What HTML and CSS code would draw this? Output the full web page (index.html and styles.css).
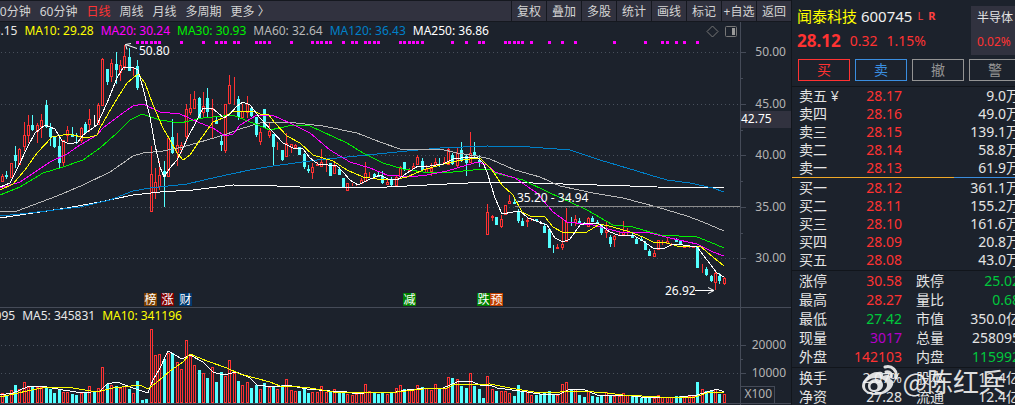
FILE: index.html
```
<!DOCTYPE html>
<html lang="zh-CN">
<head>
    <meta charset="UTF-8">
    <meta name="viewport" content="width=device-width, initial-scale=1.0">
    <title>闻泰科技 600745</title>
    <link rel="stylesheet" href="styles.css">
</head>
<body>
    <main class="main">
        <nav class="toolbar">
            <div class="periods">
                <button>30分钟</button>
                <button>60分钟</button>
                <button class="active">日线</button>
                <button>周线</button>
                <button>月线</button>
                <button>多周期</button>
                <button>更多 〉</button>
            </div>
            <div class="tools">
                <button>复权</button>
                <button>叠加</button>
                <button>多股</button>
                <button>统计</button>
                <button>画线</button>
                <button>标记</button>
                <button>+自选</button>
                <button>返回</button>
            </div>
        </nav>
        <div class="chart">
            <svg id="chart" viewBox="0 22 791 383">
                <g id="grid"></g>
                <g id="dots"></g>
                <g id="candles"></g>
                <g id="lines"></g>
                <g id="axis"></g>
                <g class="icons">
                    <path d="M707 31.5l5.5-5.5 5.5 5.5-5.5 5.5z" />
                    <rect x="725.5" y="26.5" width="11" height="10" rx="1" />
                    <rect class="fill" x="732" y="28" width="3" height="7" />
                </g>
                <g class="marks">
                    <path d="M137 48.5L125.5 44.5M131 43.5l-5.5 1 1.5 5" />
                    <text x="139" y="55">50.80</text>
                    <text x="517" y="202">35.20 - 34.94</text>
                    <text x="665" y="295">26.92</text>
                    <path d="M695 290.5h19M708 287.5l6 3-6 3" />
                </g>
                <g id="tags"></g>
            </svg>
            <div class="legend legend-price">
                <span class="ma5">MA5: 28.15</span>
                <span class="ma10">MA10: 29.28</span>
                <span class="ma20">MA20: 30.24</span>
                <span class="ma30">MA30: 30.93</span>
                <span class="ma60">MA60: 32.64</span>
                <span class="ma120">MA120: 36.43</span>
                <span class="ma250">MA250: 36.86</span>
            </div>
            <div class="legend legend-volume">
                <span class="ma5">258095</span>
                <span class="ma5">MA5: 345831</span>
                <span class="ma10">MA10: 341196</span>
            </div>
        </div>
    </main>

    <aside class="quote">
        <header class="stock">
            <div>
                <h1>闻泰科技 <span class="code">600745</span><small>L</small><small class="bold">R</small></h1>
                <p class="price"><strong>28.12</strong><span>0.32</span><span>1.15%</span></p>
            </div>
            <a class="sector" href="#">半导体<span>0.02%</span></a>
        </header>
        <div class="actions">
            <button class="buy">买</button>
            <button class="sell">卖</button>
            <button>撤</button>
            <button>警</button>
        </div>
        <table class="book">
            <tbody id="asks"></tbody>
        </table>
        <div class="ratio"><i></i></div>
        <table class="book">
            <tbody id="bids"></tbody>
        </table>
        <section class="info">
            <table>
                <tbody id="info"></tbody>
            </table>
        </section>
        <section class="info">
            <table>
                <tbody id="more"></tbody>
            </table>
        </section>
        <div class="watermark">
            <svg viewBox="0 0 36 32">
                <path fill-rule="evenodd" d="M16 7c3-1 6 0 5 4 4-2 9-1 7 3 4 1 4 5 2 8-3 5-9 8-16 8C6 30 0 26 0 21 0 14 10 6 16 7zM14 13c-6 0-11 3-11 8s5 7 11 7 11-4 11-8-5-7-11-7z" />
                <path fill-rule="evenodd" d="M14 14c-5 0-8 3-8 7s3 6 7 6 8-3 8-7-3-6-7-6zM12 18a3 3 0 1 1 0 7 3 3 0 0 1 0-7z" />
                <path class="wave" d="M23 2c7-2 13 4 11 11M24 7c4-1 6 2 5 5" />
            </svg>
            <span>@陈红兵</span>
        </div>
    </aside>

    <script src="chart.js"></script>
</body>
</html>
```
FILE: styles.css
```
* {
    box-sizing: border-box;
}
body {
    display: flex;
    margin: 0;
    min-height: 100vh;
    overflow: hidden;
    background: #1c222c;
    color: #e4e4e4;
    font-family: "Noto Sans", "Noto Sans CJK SC", sans-serif;
    font-size: 12px;
}
button {
    font: inherit;
    color: inherit;
    background: none;
    border: 0;
    padding: 0;
    cursor: pointer;
    white-space: nowrap;
}
table {
    border-collapse: collapse;
}
.main {
    flex: 1;
    min-width: 0;
}

/* toolbar */
.toolbar {
    display: flex;
    justify-content: space-between;
    height: 22px;
    background: #31323f;
    border-top: 1px solid #15181f;
    border-bottom: 1px solid #15181f;
    color: #d4d4d4;
}
.periods {
    display: flex;
    gap: 9px;
    margin-left: -7px;
}
.periods .active {
    color: #ff3333;
}
.tools {
    display: flex;
}
.tools button {
    width: 35px;
    border-left: 1px solid #15181f;
}

/* chart */
.chart {
    position: relative;
}
.chart svg {
    display: block;
    width: 100%;
}
.legend {
    position: absolute;
    display: flex;
    gap: 7px;
    line-height: 16px;
    white-space: nowrap;
}
.legend-price {
    top: 1px;
    left: -45px;
}
.legend-volume {
    top: 286px;
    left: -26px;
}
.ma5 { color: #e8e8e8; stroke: #ffffff; }
.ma10 { color: #ffff00; stroke: #ffff00; }
.ma20 { color: #ff00ff; stroke: #ff00ff; }
.ma30 { color: #00f000; stroke: #00f000; }
.ma60 { color: #b8b8b8; stroke: #b8b8b8; }
.ma120 { color: #0080c8; stroke: #0080c8; }
.ma250 { color: #ffffff; stroke: #ffffff; }
#lines polyline {
    fill: none;
    stroke-width: 1;
}
#grid line {
    stroke: #48505c;
    stroke-dasharray: 1 3;
}
#dots rect {
    fill: #ff00ff;
}
#candles, #lines, #axis, #grid, #dots {
    shape-rendering: crispEdges;
}
.up {
    fill: #1c222c;
    stroke: #ff3232;
}
.down {
    fill: #54ffff;
    stroke: #54ffff;
}
.flat {
    fill: #ffffff;
    stroke: #ffffff;
}
#axis line {
    stroke: #454b58;
}
#axis .level {
    stroke: #8c8c8c;
}
#axis text {
    fill: #b4b4b4;
    text-anchor: end;
}
#axis .box {
    fill: #31323f;
}
#axis .unit {
    fill: #1c222c;
    stroke: #454b58;
}
#axis .current {
    fill: #ffffff;
    text-anchor: start;
}
.marks text {
    fill: #ffffff;
}
.marks path {
    fill: none;
    stroke: #ffffff;
}
.icons path, .icons rect {
    fill: none;
    stroke: #777777;
}
.icons .fill {
    fill: #999999;
    stroke: none;
}
#tags text {
    fill: #ffffff;
    font-size: 12px;
    text-anchor: middle;
}

/* quote panel */
.quote {
    position: relative;
    flex: 0 0 224px;
    overflow: hidden;
    border-left: 1px solid #11151b;
}
.quote tr > * {
    padding: 0;
    font-size: 14px;
    font-weight: normal;
    white-space: nowrap;
}
.quote th {
    text-align: left;
}
.quote td {
    text-align: right;
}
.stock {
    display: flex;
    justify-content: space-between;
    height: 56px;
    padding: 4px 0 0 5px;
}
.stock h1 {
    margin: 0;
    font-size: 15px;
    font-weight: normal;
    line-height: 23px;
    color: #ffff00;
    white-space: nowrap;
}
.stock .code {
    color: #f0f0f0;
}
.stock small {
    margin-left: 5px;
    font-size: 11px;
    color: #ff4040;
    vertical-align: 2px;
}
.stock .bold {
    font-weight: bold;
}
.price {
    display: flex;
    gap: 9px;
    margin: 0;
    align-items: center;
    font-size: 14px;
    line-height: 26px;
    color: #ff3232;
}
.price strong {
    font-size: 17px;
}
.sector {
    width: 44px;
    height: 49px;
    margin-top: 2px;
    padding-left: 6px;
    background: #31323f;
    color: #e4e4e4;
    line-height: 24px;
    text-decoration: none;
    white-space: nowrap;
}
.sector span {
    display: block;
    color: #ff3232;
}
.actions {
    display: flex;
    gap: 5px;
    height: 31px;
    padding: 3px 0 5px 6px;
    border-bottom: 1px solid #11151b;
}
.actions button {
    flex: 0 0 52px;
    border: 1px solid #949494;
    color: #949494;
    font-size: 14px;
    line-height: 18px;
}
.actions .buy {
    border-color: #ff3232;
    color: #ff3232;
}
.actions .sell {
    border-color: #3a8ee0;
    color: #3a8ee0;
}
.quote table {
    width: 221px;
    margin-left: 7px;
    table-layout: fixed;
}
.quote th:nth-child(1) { width: 38px; }
.quote td:nth-child(2) { width: 65px; }
.quote th:nth-child(3) { width: 50px; padding-left: 14px; }
.book tr {
    height: 18px;
    line-height: 18px;
}
.ratio {
    height: 2px;
    border-top: 1px solid #3a8ee0;
}
.ratio i {
    display: block;
    width: 162px;
    height: 1px;
    margin-top: -1px;
    background: #f0a828;
}
.info {
    margin-top: 1px;
    border-top: 1px solid #11151b;
}
.info tr {
    height: 19px;
    line-height: 19px;
}
.red { color: #ff3232; }
.green { color: #00c83c; }
.purple { color: #b400c8; }
.watermark {
    position: absolute;
    right: 10px;
    bottom: 9px;
    display: flex;
    gap: 4px;
    align-items: center;
    color: #f4f4f4;
    font-family: "Noto Sans CJK SC", sans-serif;
    font-size: 26px;
    line-height: 32px;
    opacity: 0.9;
    white-space: nowrap;
}
.watermark svg {
    width: 36px;
    height: 32px;
    fill: #f4f4f4;
}
.watermark .wave {
    fill: none;
    stroke: #f4f4f4;
    stroke-width: 3;
    stroke-linecap: round;
}
```
FILE: chart.js
```
// u = up, d = down, f = flat; then high, open/close top, bottom, low, volume top
const candles = `
u 174 176 182 182 393|d 171 175 177 179 396|u 163 163 178 178 390|d 146 155 161 168 385|u 148 149 165 165 389
u 122 135 147 151 382|u 115 125 136 143 387|d 115 125 130 131 387|u 123 125 132 143 387|u 114 120 127 138 387
d 100 105 127 128 388|d 123 128 137 146 389|d 136 137 147 148 393|d 138 146 163 168 390|u 140 140 163 166 392
u 126 130 136 142 392|d 127 134 137 137 394|d 133 137 138 144 395|u 127 128 141 143 393|d 122 124 133 133 393
u 109 119 125 132 386|f 115 125 125 126 392|u 103 105 125 125 388|u 58 59 106 106 367|d 69 69 82 85 384
u 59 63 77 82 385|d 52 64 70 84 386|u 60 65 73 81 388|u 45 56 67 70 386|d 48 57 71 71 389
u 67 70 70 76 393|d 60 66 88 90 381|f 136 136 136 136 400|f 180 180 180 180 399|u 146 174 212 212 329
u 168 182 193 199 355|u 161 175 187 190 354|d 161 171 177 207 359|u 138 138 177 177 353|d 119 137 153 154 353
u 133 145 153 166 362|u 142 145 150 153 369|u 104 109 137 142 340|u 94 108 113 115 356|u 91 99 109 109 365
d 97 98 119 119 370|u 92 106 113 118 373|d 88 98 112 117 378|u 99 108 110 138 367|d 117 121 124 124 382
d 135 141 145 151 372|u 104 104 151 153 376|u 75 85 104 104 360|u 77 92 92 105 373|d 96 99 117 120 381
u 104 111 118 118 385|u 96 104 113 118 382|d 106 108 116 117 388|d 117 117 135 137 385|u 128 132 142 145 389
d 109 109 128 128 383|u 122 131 136 138 387|d 134 134 147 166 387|u 142 148 149 150 389|d 150 150 160 161 385
u 133 143 157 157 379|u 144 144 148 153 390|u 144 145 148 148 391|d 147 147 155 155 391|d 153 154 167 169 388
d 165 169 171 173 393|u 163 167 173 179 392|u 162 164 166 166 392|u 149 162 167 167 386|u 159 165 165 172 392
d 163 163 176 176 391|u 163 166 174 174 389|d 167 169 175 175 391|d 178 178 187 187 392|u 183 183 191 191 394
u 183 185 185 186 395|u 183 185 186 186 394|u 178 180 184 184 393|u 162 173 182 182 384|u 172 174 174 178 391
d 173 174 177 177 392|d 172 175 177 177 394|d 171 176 183 184 392|u 180 182 185 185 394|d 177 180 185 186 393
u 175 177 186 186 388|u 166 167 177 177 385|d 162 162 170 171 389|u 168 170 172 172 390|u 163 166 169 169 390
u 155 157 165 165 385|d 158 161 170 170 387|u 165 169 173 173 388|u 163 168 172 176 390|u 158 162 165 166 384
d 158 162 163 167 388|u 157 162 164 164 388|u 148 149 165 165 377|d 153 155 164 165 378|u 148 153 166 168 379
d 142 150 161 162 386|d 154 156 163 176 388|u 132 153 163 163 373|d 142 152 156 158 386|d 155 160 162 167 389
f 202 202 202 202 398|u 204 212 235 235 376|u 215 216 218 221 389|d 217 217 225 225 391|u 215 219 227 228 391
u 205 205 215 215 391|u 195 201 204 204 393|d 198 202 204 204 396|d 209 211 221 223 385|d 218 221 226 226 392
u 217 220 222 227 392|u 218 220 221 221 395|d 219 219 221 221 395|f 221 223 223 224 394|d 223 226 233 233 392
d 228 229 248 248 391|d 245 252 253 253 394|u 244 247 249 249 395|u 219 244 248 250 384|u 208 222 242 242 382
d 217 222 223 226 390|u 215 219 223 226 389|d 218 221 223 223 395|d 222 223 225 225 397|u 217 218 227 227 391
d 216 218 222 222 396|d 220 222 224 224 397|d 225 225 233 235 396|u 222 230 233 238 392|d 235 237 244 247 395
u 235 236 240 247 396|u 232 234 234 236 396|u 221 232 235 236 393|u 228 233 234 235 395|d 233 235 238 238 396
d 237 239 244 244 396|d 237 239 241 241 398|d 241 243 250 250 398|d 249 251 256 256 398|u 250 253 257 257 398
u 240 240 250 250 395|u 240 244 245 245 397|u 238 241 244 244 397|u 243 245 245 246 397|d 238 240 242 242 396
d 240 240 245 245 396|u 245 246 248 248 397|u 246 247 248 248 396|u 246 246 248 248 396|d 246 247 268 268 382
u 264 268 268 273 389|d 267 269 275 276 391|d 275 276 281 282 391|u 272 273 283 290 389|d 273 276 281 284 394
u 277 278 284 285 394`.trim().split(/[|\n]/).map(c => c.split(' '));

const lines = {
    ma250: '0,218 33,213 67,208 100,202 133,195 160,192 193,190 233,185 277,186 300,187 387,187 447,184 490,182 503,182 563,184 630,186 657,187 724,188',
    ma120: '0,216 20,214 80,207 110,200 133,191 150,188 187,184 217,177 250,170 273,166 317,160 367,155 407,151 440,148 487,146 530,147 570,150 600,160 637,171 650,175 667,180 690,183 713,188 724,192',
    ma60: '0,212 17,211 33,205 57,196 83,185 110,172 133,156 143,153 163,151 183,147 207,140 227,134 240,129 260,123 287,122 323,126 357,133 380,142 400,149 440,149 457,153 477,156 490,159 515,170 540,177 560,186 593,193 623,198 657,207 687,216 703,222 724,231',
    ma30: '0,195 20,187 43,173 63,167 83,160 100,148 117,133 130,120 142,114 160,120 180,123 203,118 233,115 240,118 253,123 270,130 293,125 310,126 347,143 363,153 383,163 403,169 430,173 453,172 473,170 490,169 495,173 523,180 550,193 570,202 587,210 613,225 633,227 660,235 697,237 710,242 724,248',
    ma20: '0,188 20,182 50,162 67,154 80,145 97,135 103,128 120,115 133,106 143,104 160,112 180,114 200,123 213,128 225,136 233,134 240,125 257,115 272,115 290,123 310,133 330,150 350,162 370,168 387,175 410,177 427,175 447,171 467,165 478,162 487,165 495,172 515,178 537,193 553,212 567,222 593,225 620,232 650,233 670,238 697,244 713,252 724,256',
    ma10: '0,190 13,184 25,170 37,153 52,137 68,134 87,138 97,135 100,128 115,102 127,83 138,74 145,83 153,105 163,128 170,140 177,153 183,160 190,155 200,140 213,122 223,118 233,111 253,111 260,114 268,114 275,123 287,136 300,143 313,155 333,161 347,170 363,177 377,179 393,180 407,177 423,170 440,165 457,161 470,159 480,158 492,170 502,185 513,195 522,212 530,216 545,217 553,227 562,232 585,233 600,224 613,227 630,232 643,237 653,242 667,243 677,246 700,246 713,257 724,266',
    ma5: '0,187 10,183 18,167 27,148 35,133 45,125 55,129 62,141 70,144 78,142 83,135 97,125 107,103 117,78 123,68 132,67 138,70 143,88 150,117 155,145 160,167 164,177 170,168 177,160 182,150 188,137 197,120 203,108 212,108 218,113 224,118 230,114 237,106 243,102 250,105 260,118 272,131 283,143 293,148 303,149 310,158 318,164 337,166 343,172 350,180 358,185 368,180 380,175 388,179 397,180 407,173 418,166 430,166 443,164 453,159 470,157 477,157 483,163 487,172 495,198 502,214 513,212 520,211 528,218 547,225 555,238 563,242 570,239 580,225 587,223 598,223 610,232 618,235 633,235 643,241 653,248 663,249 673,244 683,245 697,247 707,260 717,273 724,277'
};
const volumeLines = {
    ma5: '0,395 13,393 27,387 42,386 63,390 83,393 100,391 107,384 117,382 133,388 148,393 153,380 160,368 168,351 182,359 190,355 203,362 213,372 223,375 237,372 250,378 257,385 265,386 278,387 287,385 307,389 330,391 347,392 358,394 370,392 390,393 407,390 427,388 443,388 457,382 470,381 483,386 490,385 497,388 520,391 540,394 560,394 570,389 583,389 597,395 623,395 650,398 680,397 697,395 717,389 724,392',
    ma10: '0,397 27,391 47,387 67,387 97,392 113,388 140,385 148,389 157,382 170,371 183,362 190,354 207,361 227,368 240,374 270,382 280,386 290,386 310,388 333,392 367,393 397,392 423,389 447,388 453,385 490,384 510,388 540,393 580,391 607,393 623,395 660,397 695,397 707,393 724,392'
};
const dots = [31, 32, 33, 34, 35, 36, 41, 46, 49, 50, 51, 53, 54, 58, 59, 60, 61, 66, 71, 72, 73, 74, 75, 78, 80, 81, 83, 84, 85, 86,
    91, 92, 93, 94, 95, 96, 103, 106, 109, 110, 115, 116, 117, 118, 119, 121, 125, 128, 131, 140, 147, 151, 152, 154, 156, 159];
const tags = [[144, '榜', '#7b3f00'], [161, '涨', '#800000'], [179, '财', '#003a70'], [403, '减', '#008000'], [477, '跌', '#008000'], [490, '预', '#c04000']];

const draw = (id, html) => document.getElementById(id).innerHTML = html;
const candleX = i => Math.round(1.8 + i * 4.375) + 0.5;
const hline = (x1, x2, y, cls = '') => `<line class="${cls}" x1="${x1}" x2="${x2}" y1="${y + 0.5}" y2="${y + 0.5}" />`;
const polylines = set => Object.keys(set).map(k => `<polyline class="${k}" points="${set[k]}" />`).join('');

draw('candles', candles.map(([dir, high, top, bottom, low, vol], i) => {
    const x = candleX(i);
    const cls = { u: 'up', d: 'down', f: 'flat' }[dir];
    const volCls = dir === 'u' ? 'up' : 'down';
    return `<path class="${cls}" d="M${x} ${high}V${low}" />
        <rect class="${cls}" x="${x - 1}" y="${+top + 0.5}" width="2" height="${Math.max(bottom - top - 1, 0)}" />
        <rect class="${volCls}" x="${x - 1}" y="${+vol + 0.5}" width="2" height="${402 - vol}" />`;
}).join(''));
draw('lines', polylines(lines) + polylines(volumeLines));
draw('grid', [52, 104, 155, 207, 258, 345, 373].map(y => hline(1, 740, y)).join(''));
draw('dots', dots.map(i => `<rect x="${candleX(i) - 1.5}" y="41" width="3" height="3" />`).join(''));

let axis = hline(0, 791, 307) + hline(0, 791, 403) + hline(515, 740, 206, 'level') + '<line x1="740.5" x2="740.5" y1="22" y2="405" />';
[[52, '50.00'], [104, '45.00'], [155, '40.00'], [207, '35.00'], [258, '30.00'], [345, '20000'], [373, '10000']].forEach(([y, label]) => {
    axis += hline(741, 746, y) + `<text x="786" y="${y + 4}">${label}</text>`;
});
[78, 130, 181, 233, 359].forEach(y => axis += hline(741, 743, y));
axis += `<rect class="box" x="741" y="111" width="50" height="17" /><text class="current" x="741" y="123">42.75</text>
    <rect class="unit" x="740.5" y="386.5" width="34" height="17" /><text x="772" y="398">X100</text>`;
draw('axis', axis);
draw('tags', tags.map(([x, t, color]) => `<rect x="${x}" y="293" width="13" height="13" fill="${color}" /><text x="${x + 6.5}" y="304">${t}</text>`).join(''));

const bookRow = ([name, price, vol]) => `<tr><th>${name}</th><td class="red">${price}</td><td>${vol}</td></tr>`;
draw('asks', [['卖五 ¥', '28.17', '9.0万'], ['卖四', '28.16', '49.0万'], ['卖三', '28.15', '139.1万'], ['卖二', '28.14', '58.8万'], ['卖一', '28.13', '61.9万']].map(bookRow).join(''));
draw('bids', [['买一', '28.12', '361.1万'], ['买二', '28.11', '155.2万'], ['买三', '28.10', '161.6万'], ['买四', '28.09', '20.8万'], ['买五', '28.08', '43.0万']].map(bookRow).join(''));

const infoRow = ([a, av, ac, b, bv, bc]) => `<tr><th>${a}</th><td class="${ac}">${av}</td><th>${b}</th><td class="${bc}">${bv}</td></tr>`;
draw('info', [
    ['涨停', '30.58', 'red', '跌停', '25.02', 'green'],
    ['最高', '28.27', 'red', '量比', '0.68', 'green'],
    ['最低', '27.42', 'green', '市值', '350.0亿', ''],
    ['现量', '3017', 'purple', '总量', '258095', ''],
    ['外盘', '142103', 'red', '内盘', '115992', 'green']
].map(infoRow).join(''));
draw('more', [
    ['换手', '2.07%', '', '股本', '12.4亿', ''],
    ['净资', '27.28', '', '流通', '12.4亿', '']
].map(infoRow).join(''));
```
